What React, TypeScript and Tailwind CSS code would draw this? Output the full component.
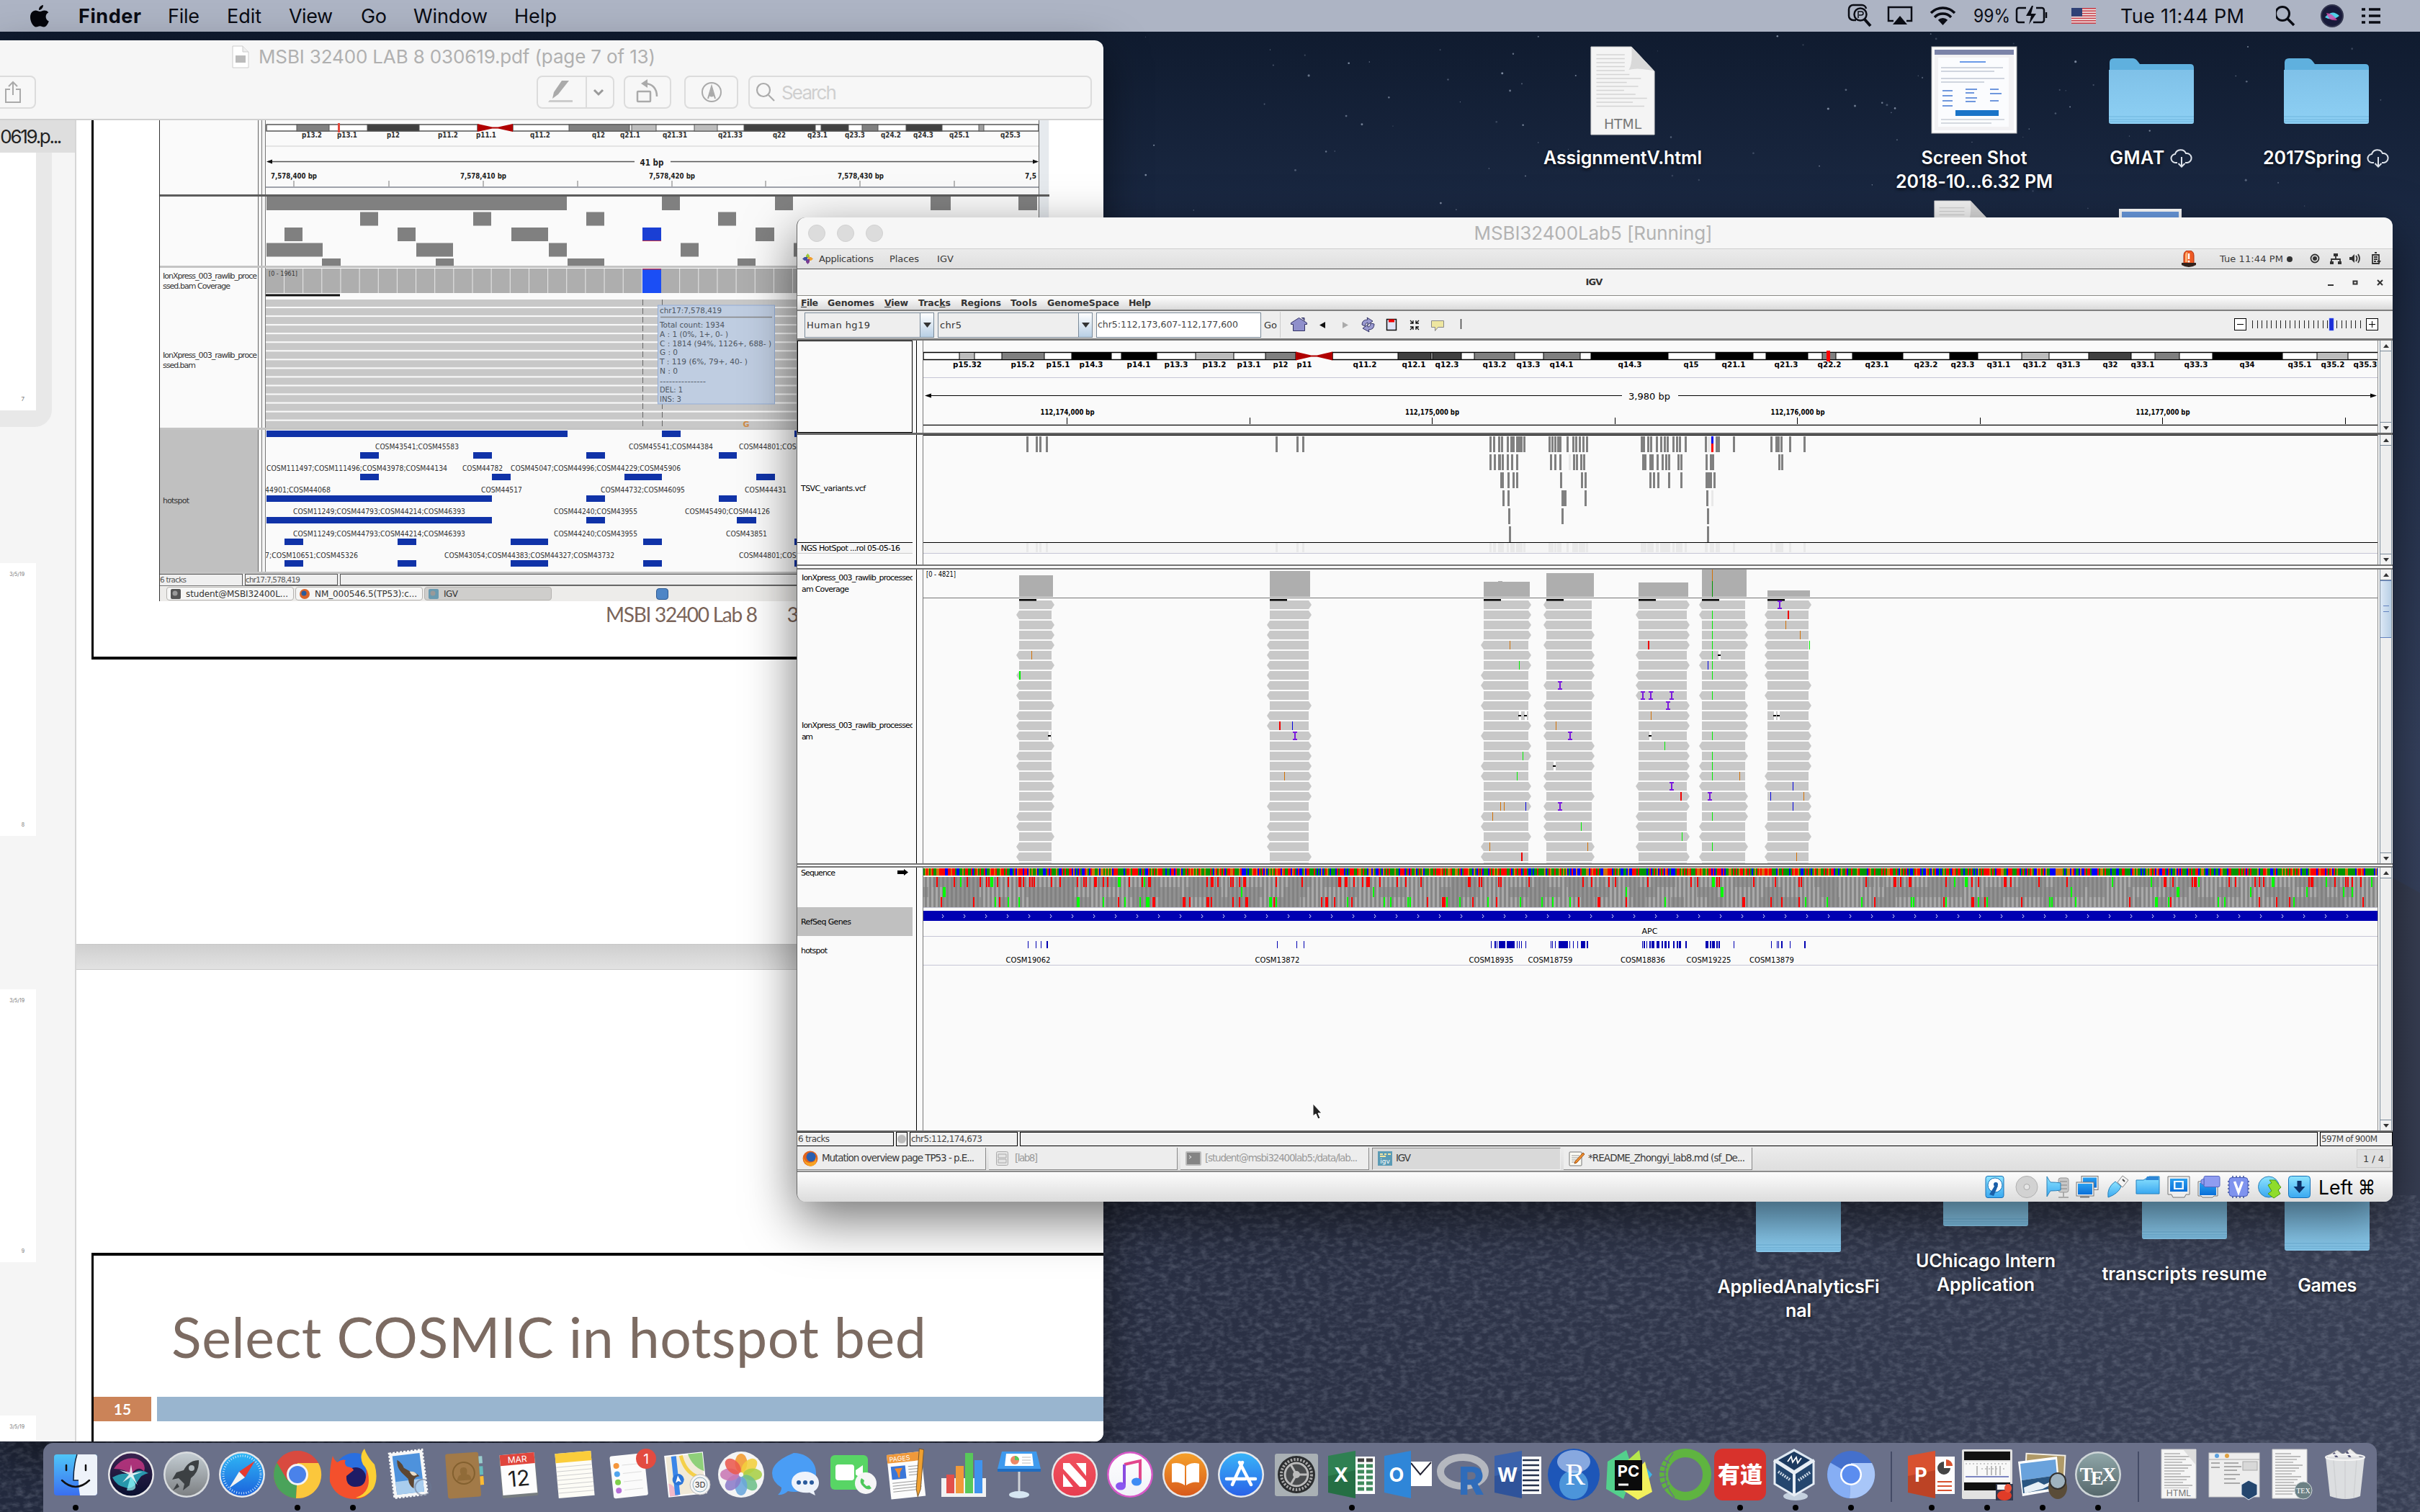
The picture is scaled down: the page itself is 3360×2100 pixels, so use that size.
import React, { useLayoutEffect, useRef, useState, ReactNode } from "react";

const SANS = "[font-family:Inter,sans-serif]";
const DJV = "[font-family:'DejaVu_Sans',sans-serif]";

/* Text whose letter spacing is adjusted so that it fills a given width. */
function Fit({ w, className = "", children }: { w: number; className?: string; children: ReactNode }) {
  const ref = useRef<HTMLSpanElement>(null);
  const [ls, setLs] = useState(0);
  useLayoutEffect(() => {
    const el = ref.current;
    if (!el) return;
    const n = (el.textContent || "").length;
    if (n > 1) setLs((w - el.getBoundingClientRect().width) / (n - 1));
  }, [w]);
  return (
    <span ref={ref} className={"inline-block shrink-0 whitespace-pre " + className} style={{ letterSpacing: ls + "px" }}>
      {children}
    </span>
  );
}

type TxProps = {
  x: number; y: number; w?: number; s?: number; b?: boolean; f?: string;
  a?: "start" | "middle" | "end"; children: ReactNode;
};
/* Chart label: y is the vertical middle of the text. */
function Tx({ x, y, w, s = 11, b, f = "#111", a = "middle", children }: TxProps) {
  return (
    <text x={x} y={y + s * 0.37} fontSize={s} fontWeight={b ? 700 : 400} fill={f} textAnchor={a}
      textLength={w} lengthAdjust="spacingAndGlyphs" className={DJV}>
      {children}
    </text>
  );
}

/* ---------------------------------------------------------------- menu bar */

function AppleLogo() {
  return (
    <svg width="26" height="31" viewBox="0 0 26 31" fill="#05060c">
      <path d="M18 0c.2 3.6-2.700 7-6 7C11.600 3.600 14.700.3 18 0zM21.600 16.300c0-3 1.700-4.700 3.700-6C23.800 8.300 21.700 7.600 19.700 7.600c-2.700 0-4.200 1.400-6.200 1.400S9.700 7.600 7.500 7.600C3.500 7.600 0 11 0 17c0 6.500 4.500 13.500 8 13.500 2 0 3-1.300 5.500-1.300s3.200 1.300 5.500 1.300c3 0 5.700-4.500 6.800-8-2.500-1.100-4.200-3.200-4.200-6.200z" />
    </svg>
  );
}

function MenuBar() {
  return (
    <div className={"flex h-11 items-center bg-[#adb4c4] text-[27px] leading-none text-[#0a0c14] " + SANS}>
      <div className="w-[109px] pl-[42px]"><AppleLogo /></div>
      <div className="w-[124px] font-bold"><Fit w={87}>Finder</Fit></div>
      <div className="w-[82px]"><Fit w={44}>File</Fit></div>
      <div className="w-[86px]"><Fit w={48}>Edit</Fit></div>
      <div className="w-[100px]"><Fit w={61}>View</Fit></div>
      <div className="w-[73px]"><Fit w={36}>Go</Fit></div>
      <div className="w-[140px]"><Fit w={103}>Window</Fit></div>
      <div><Fit w={59}>Help</Fit></div>
      <div className="flex-1" />
      <svg width="290" height="44" viewBox="2555 0 290 44" fill="none" stroke="#0a0c14" strokeWidth="2.500">
        <path d="M2578 28h-4a6 6 0 0 1-6-6v-9a6 6 0 0 1 6-6h12a6 6 0 0 1 6 5" />
        <circle cx="2584" cy="20" r="8.500" fill="#adb4c4" />
        <path d="M2581 25v-9h4q3 0 3 2.500t-3 2.500h-3" strokeWidth="1.500" />
        <path d="M2590 27l8 9" strokeWidth="4" />
        <path d="M2630 29h-7V10h32v19h-7" />
        <path d="M2639 22l10 12h-20z" fill="#0a0c14" stroke="none" />
        <path d="M2682 18a23 23 0 0 1 33 0M2687 24a16 16 0 0 1 23 0M2693 29a8 8 0 0 1 11 0" strokeWidth="3.500" />
        <path d="M2694 30l4.500 5 4.500-5a6 6 0 0 0-9 0z" fill="#0a0c14" stroke="none" />
        <g transform="translate(2800 8)" strokeWidth="2.500">
          <path d="M14 3H4a3 3 0 0 0-3 3v14a3 3 0 0 0 3 3h8M28 3h8a3 3 0 0 1 3 3v14a3 3 0 0 1-3 3H24" />
          <path d="M22 0l-8 14h7l-3 12 10-15h-7l3-11z" fill="#0a0c14" stroke="none" />
          <path d="M42 9v8" />
        </g>
        <text x="2741" y="31" fontSize="25" fill="#0a0c14" stroke="none" textLength="51" lengthAdjust="spacingAndGlyphs" className={SANS}>99%</text>
      </svg>
      <svg width="34" height="22" viewBox="0 0 34 22" className="ml-8">
        <rect width="34" height="22" fill="#f2eded" />
        {[0, 2, 4, 6, 8, 10, 12].map((i) => <rect key={i} y={(i * 22) / 13} width="34" height="1.700" fill="#c8404a" />)}
        <rect width="15" height="11.800" fill="#2f4176" />
      </svg>
      <div className="ml-[34px] w-[216px]"><Fit w={172}>Tue 11:44 PM</Fit></div>
      <svg width="145" height="44" viewBox="3160 0 145 44" fill="none" stroke="#0a0c14" strokeWidth="3" className="mr-[55px]">
        <circle cx="3169" cy="19" r="9.500" />
        <path d="M3176 26l9 9" strokeWidth="3.500" />
        <circle cx="3238" cy="22" r="15" fill="#181a3a" stroke="#33364f" strokeWidth="2" />
        <path d="M3228 24q10-12 20-2q-10 8-20 2z" fill="#4fd0e8" stroke="none" />
        <path d="M3230 18q8 0 15 10q-12 2-15-10z" fill="#d748a8" stroke="none" opacity=".8" />
        <path d="M3279 13h5M3279 22h5M3279 31h5M3289 13h24M3289 22h24M3289 31h24" strokeWidth="3.500" />
      </svg>
    </div>
  );
}

/* ----------------------------------------------------------- preview window */

type Seg = [number, number, string];
const W = "#fff";

function Ideogram({ segs, y, h, line, cen }: { segs: Seg[]; y: number; h: number; line: string; cen: [number, number] }) {
  const x0 = segs[0][0];
  const x1 = segs[segs.length - 1][1];
  const mid = (cen[0] + cen[1]) / 2;
  return (
    <g>
      <rect x={x0} y={y} width={cen[0] - x0} height={h} fill="#fff" stroke={line} strokeWidth="1.500" />
      <rect x={cen[1]} y={y} width={x1 - cen[1]} height={h} fill="#fff" stroke={line} strokeWidth="1.500" />
      {segs.filter((s) => s[2] !== W).map((s, i) => (
        <rect key={i} x={s[0]} y={y} width={s[1] - s[0]} height={h} fill={s[2]} stroke={line} strokeWidth="1" />
      ))}
      <path d={`M${cen[0]} ${y - 1}L${mid - 4} ${y + h / 2 - 1}H${mid + 4}L${cen[1]} ${y - 1}V${y + h + 1}L${mid + 4} ${y + h / 2 + 1}H${mid - 4}L${cen[0]} ${y + h + 1}z`} fill="#b00000" />
    </g>
  );
}

const SLIDE_SEGS: Seg[] = [
  [370, 412, W], [412, 457, "#808080"], [510, 582, "#404040"], [790, 874, "#808080"], [877, 911, "#bdbdbd"],
  [964, 996, "#bdbdbd"], [1033, 1132, "#404040"], [1140, 1178, "#404040"], [1197, 1219, "#808080"],
  [1258, 1308, "#404040"], [1359, 1366, "#a0a0a0"], [1366, 1442, W],
];
const SLIDE_BANDS: [string, number][] = [
  ["p13.2", 433], ["p13.1", 482], ["p12", 546], ["p11.2", 622], ["p11.1", 675], ["q11.2", 750], ["q12", 831],
  ["q21.1", 875], ["q21.31", 937], ["q21.33", 1014], ["q22", 1082], ["q23.1", 1135], ["q23.3", 1187], ["q24.2", 1237],
  ["q24.3", 1282], ["q25.1", 1332], ["q25.3", 1403],
];
const SLIDE_VARIANTS: [number, number, number][] = [
  [273, 370, 787], [273, 919, 944], [273, 1076, 1101], [273, 1292, 1320], [273, 1414, 1440],
  [294.500, 500, 525], [294.500, 657, 682], [294.500, 814, 839], [294.500, 997, 1022],
  [316, 395, 420], [316, 552, 577], [316, 710, 761], [316, 1049, 1075],
  [337.500, 370, 448], [337.500, 578, 629], [337.500, 762, 787], [337.500, 945, 970], [337.500, 1102, 1130],
  [359, 447, 473], [359, 605, 630], [359, 788, 839], [359, 1024, 1049],
];
const SLIDE_BARS: [number, number, number][] = [
  [598, 370, 788], [598, 919, 945], [598, 1103, 1120], [628, 500, 526], [628, 657, 683], [628, 814, 840], [628, 998, 1023],
  [658, 500, 526], [658, 683, 709], [658, 867, 919], [658, 1050, 1076], [688, 370, 683], [688, 814, 840], [688, 998, 1023],
  [718, 370, 683], [718, 814, 840], [718, 1023, 1050],
  [748, 395, 421], [748, 552, 578], [748, 709, 761], [748, 893, 919], [748, 1103, 1120],
  [778, 395, 421], [778, 552, 578], [778, 709, 761], [778, 893, 919], [778, 1103, 1120],
];
const SLIDE_COSM: [number, number, number, string][] = [
  [620, 521, 637, "COSM43541;COSM45583"], [620, 873, 990, "COSM45541;COSM44384"], [620, 1026, 1143, "COSM44801;COSM44384"],
  [650, 370, 621, "COSM111497;COSM111496;COSM43978;COSM44134"], [650, 642, 698, "COSM44782"],
  [650, 709, 945, "COSM45047;COSM44996;COSM44229;COSM45906"],
  [680, 368, 459, "44901;COSM44068"], [680, 668, 725, "COSM44517"], [680, 834, 951, "COSM44732;COSM46095"], [680, 1034, 1092, "COSM44431"],
  [710, 407, 646, "COSM11249;COSM44793;COSM44214;COSM46393"], [710, 769, 885, "COSM44240;COSM43955"], [710, 951, 1069, "COSM45490;COSM44126"],
  [741, 407, 646, "COSM11249;COSM44793;COSM44214;COSM46393"], [741, 769, 885, "COSM44240;COSM43955"], [741, 1008, 1065, "COSM43851"],
  [771, 362, 497, "97;COSM10651;COSM45326"], [771, 617, 853, "COSM43054;COSM44383;COSM44327;COSM43732"], [771, 1026, 1143, "COSM44801;COSM44384"],
];

function SlideRow({ h, label, children, y, dark }: { h: number; y: number; label?: ReactNode; children: ReactNode; dark?: boolean }) {
  return (
    <div className={"flex border-b-[3px] bg-[#fafafa] " + (dark ? "border-[#5c5c5c]" : "border-[#c4c4c4]")}>
      <div className={"relative w-[137px] shrink-0 border-r border-[#666] text-[11px] leading-[14px] text-[#333] " + DJV}>{label}</div>
      <div className="w-[10px] shrink-0 border-r border-[#777] bg-[#f4f4f4]"><div className="ml-1 h-full w-px bg-[#777]" /></div>
      <svg width="1073" height={h} viewBox={`369 ${y} 1073 ${h}`} className="block shrink-0">{children}</svg>
      <div className="w-[14px] border-l border-[#666] bg-[#e6eaee]" />
    </div>
  );
}

function SlideShot() {
  return (
    <div className="ml-[92px] w-[1236px] border-l border-[#333]">
      <SlideRow h={103} y={167} dark>
        <Ideogram segs={SLIDE_SEGS} y={173} h={9} line="#555" cen={[663, 712]} />
        <rect x="469" y="171" width="3" height="13" fill="#e2483c" />
        {SLIDE_BANDS.map(([t, x]) => <Tx key={t} x={x} y={187} w={t.length === 6 ? 34 : t.length === 5 ? 28 : 18} s={10.500} b f="#333">{t}</Tx>)}
        <path d="M369 203h1073" stroke="#ddd" strokeWidth="1.500" />
        <path d="M372 224.500H881M931 224.500H1440" stroke="#555" strokeWidth="1.500" />
        <path d="M370 224.500l8-3v6zM1442 224.500l-8-3v6z" fill="#111" />
        <Tx x={905} y={225.500} w={33} s={12.500} b f="#222">41 bp</Tx>
        {[408, 671, 933, 1195].map((x, i) => <Tx key={x} x={x} y={243.500} w={64} s={11} b f="#222">{`7,578,4${i}0 bp`}</Tx>)}
        <Tx x={1431} y={243.500} w={16} s={11} b f="#222">7,5</Tx>
        {[408, 540, 671, 802, 933, 1063, 1194, 1325].map((x) => <path key={x} d={`M${x} 251v8`} stroke="#777" />)}
        <path d="M369 260h1073" stroke="#808590" strokeWidth="1.500" />
      </SlideRow>
      <SlideRow h={96} y={273}>
        {SLIDE_VARIANTS.map(([y, a, b], i) => <rect key={i} x={a} y={y} width={b - a} height="19" fill="#808080" />)}
        <rect x="892" y="316" width="26" height="19" fill="#1a3fd4" />
        <rect x="892" y="334" width="26" height="1" fill="#d03040" />
      </SlideRow>
      <SlideRow h={222} y={372}
        label={<div className="flex h-full flex-col pl-1">
          <div className="mt-[5px]"><Fit w={131}>IonXpress_003_rawlib_proce</Fit></div>
          <div><Fit w={94}>ssed.bam Coverage</Fit></div>
          <div className="mt-[82px]"><Fit w={131}>IonXpress_003_rawlib_proce</Fit></div>
          <div><Fit w={46}>ssed.bam</Fit></div>
        </div>}>
        <rect x="369" y="373" width="1073" height="34" fill="#aeaeae" />
        {Array.from({ length: 41 }, (_, i) => <path key={i} d={`M${394.500 + i * 26.150} 373v34`} stroke="#e8e8e8" />)}
        <Tx x={373} y={379} w={40} s={9.500} a="start" f="#333">[0 - 1961]</Tx>
        <rect x="892" y="374" width="26" height="33" fill="#1b4ef5" />
        <rect x="892" y="373" width="26" height="1.500" fill="#b03050" />
        <rect x="369" y="408.500" width="103" height="3" fill="#111" />
        {Array.from({ length: 15 }, (_, i) => <rect key={i} x="369" y={416 + i * 12.050} width="1073" height="10" fill="#c8c8c8" />)}
        <path d="M892.500 416v178M919.500 416v178" stroke="#666" strokeDasharray="8 4" />
        <Tx x={1036} y={589} s={11} b f="#cf8a45">G</Tx>
        <rect x="913.500" y="424" width="162" height="137" fill="#bfcde1" stroke="#94aed8" />
        <path d="M917 440.500h155" stroke="#888" strokeWidth="1.500" />
        {([[431, 86, "chr17:7,578,419"], [451, 90, "Total count: 1934"], [464, 95, "A : 1 (0%, 1+, 0- )"], [477, 155, "C : 1814 (94%, 1126+, 688- )"],
          [489.500, 25, "G : 0"], [502.500, 122, "T : 119 (6%, 79+, 40- )"], [515.500, 25, "N : 0"], [529, 64, "---------------"], [541, 32, "DEL: 1"], [554, 30, "INS: 3"]] as [number, number, string][]).map(([y, w, t]) => (
          <Tx key={y} x={916} y={y} w={w} s={10.500} a="start" f="#4d5560">{t}</Tx>
        ))}
      </SlideRow>
      <SlideRow h={197} y={597} label={<div className="flex h-full items-center bg-[#c0c0c0] pl-1"><Fit w={37}>hotspot</Fit></div>}>
        {SLIDE_BARS.map(([y, a, b], i) => <rect key={i} x={a} y={y} width={b - a} height="9" fill="#1033a8" />)}
        {SLIDE_COSM.map(([y, a, b, t], i) => <Tx key={i} x={a} y={y + 0.500} w={b - a} s={10.500} a="start" f="#333">{t}</Tx>)}
      </SlideRow>
      <div className={"flex h-[17px] gap-[3px] border-b border-[#777] bg-[#efefef] text-[10.500px] leading-[15px] text-[#555] " + DJV}>
        <div className="w-[115px] border-t border-r border-[#555]"><Fit w={37}>6 tracks</Fit></div>
        <div className="w-[129px] border border-[#555]"><Fit w={76}>chr17:7,578,419</Fit></div>
        <div className="flex-1 border border-r-0 border-[#555]" />
      </div>
      <div className={"flex h-[21px] items-center gap-[2px] bg-[#edecea] pl-[9px] text-[12px] leading-none text-[#333] " + DJV}>
        {[["student@MSBI32400L...", "#555", 142], ["NM_000546.5(TP53):c...", "#d9642a", 142], ["IGV", "#6a9ab0", 20]].map(([t, c, w], i) => (
          <div key={i} className={"flex h-[19px] w-[177px] items-center gap-[7px] rounded-sm border border-[#b5b3b0] pl-[5px] " + (i === 2 ? "bg-[#cfcecc]" : "bg-[#f6f6f5]")}>
            <svg width="14" height="14" viewBox="0 0 14 14"><rect width="14" height="14" rx={i === 1 ? 7 : 2} fill={c as string} /><circle cx="6" cy="6" r="3.500" fill={i === 1 ? "#2c5a9c" : "#999"} /></svg>
            <Fit w={w as number}>{t}</Fit>
          </div>
        ))}
        <div className="ml-[143px] h-4 w-[17px] rounded-sm border border-[#2d5a92] bg-[#4f86c6]" />
      </div>
    </div>
  );
}

function ToolButton({ w, className = "", children }: { w: number; className?: string; children: ReactNode }) {
  return (
    <div className={"flex h-[46px] shrink-0 items-center justify-center rounded-[8px] border-2 border-[#dcdcdc] bg-[#f7f7f7] " + className} style={{ width: w }}>
      {children}
    </div>
  );
}

function PreviewWindow() {
  return (
    <div className="absolute left-0 top-[56px] flex h-[1946px] w-[1532px] flex-col overflow-hidden rounded-r-[12px] bg-[#f6f6f6] shadow-[0_20px_60px_rgba(0,0,0,0.5)]">
      <div className={"flex h-[46px] items-center pl-[322px] text-[26px] leading-none text-[#b0b0b0] " + SANS}>
        <svg width="24" height="32" viewBox="0 0 24 32" className="mr-[13px]">
          <path d="M1 1h14l8 8v22H1z" fill="#fff" stroke="#ccc" />
          <path d="M15 1v8h8" fill="#eee" stroke="#ccc" />
          <path d="M5 14h14v10H5z" fill="#bbb" />
        </svg>
        <Fit w={551}>MSBI 32400 LAB 8 030619.pdf (page 7 of 13)</Fit>
      </div>
      <div className={"flex h-[65px] items-start border-b-2 border-[#d0d0d0] pt-[3px] " + SANS}>
        <ToolButton w={62} className="-ml-3">
          <svg width="24" height="32" viewBox="0 0 24 32" fill="none" stroke="#aaa" strokeWidth="2"><path d="M7 12H1v18h20V12h-6M11 20V2M5 8l6-6 6 6" /></svg>
        </ToolButton>
        <ToolButton w={108} className="ml-[695px]">
          <svg width="104" height="42" viewBox="0 0 104 42" fill="#aaa">
            <path d="M33 5L22 21l-2 9 8-6L43 5z" /><path d="M16 32h32v3H14z" fill="#ccc" />
            <path d="M66 0h2v42h-2z" fill="#dcdcdc" /><path d="M78 18l6 6 6-6" fill="none" stroke="#999" strokeWidth="3" />
          </svg>
        </ToolButton>
        <ToolButton w={66} className="ml-[13px]">
          <svg width="40" height="38" viewBox="0 0 40 38" fill="none" stroke="#aaa" strokeWidth="2.500"><rect x="6" y="18" width="18" height="14" rx="1" /><path d="M16 7c10 0 17 6 17 18" /><path d="M20 1v12l-9-6z" fill="#aaa" stroke="none" /></svg>
        </ToolButton>
        <ToolButton w={75} className="ml-[18px]">
          <svg width="30" height="30" viewBox="0 0 30 30" fill="none" stroke="#aaa" strokeWidth="2"><circle cx="15" cy="15" r="13" /><path d="M10 24l5-17 5 17M15 7v8" /><circle cx="15" cy="18" r="2.500" fill="#aaa" /></svg>
        </ToolButton>
        <ToolButton w={477} className="ml-[14px]">
          <div className="flex w-full items-center gap-2 pl-2 text-[26px] text-[#cfcfcf]">
            <svg width="28" height="28" viewBox="0 0 28 28" fill="none" stroke="#aaa" strokeWidth="2.200"><circle cx="11" cy="11" r="9" /><path d="M18 18l8 8" /></svg>
            <Fit w={77}>Search</Fit>
          </div>
        </ToolButton>
      </div>
      <div className="flex min-h-0 flex-1">
        <div className={"flex w-[106px] shrink-0 flex-col overflow-hidden border-r-2 border-[#d6d6d6] bg-[#f5f5f5] text-[26px] " + SANS}>
          <div className="flex h-[45px] shrink-0 items-center justify-end bg-[#dedede] pr-[20px] leading-none text-[#222]"><Fit w={86}>0619.p...</Fit></div>
          <div className="h-[381px] w-[72px] shrink-0 rounded-br-[24px] bg-[#e8e8e8]">
            <div className="flex h-[358px] w-[50px] items-end justify-end bg-white pb-3 pr-4 text-[8px] leading-none text-[#777]">7</div>
          </div>
          {[0, 1, 2].map((i) => (
            <div key={i} className={"flex h-[379px] w-[50px] shrink-0 flex-col items-end justify-between bg-white pr-4 pt-3 pb-3 text-[7px] leading-none text-[#777] " + (i ? "mt-[213px]" : "mt-[189px]")}>
              <span>3/5/19</span><span>{8 + i}</span>
            </div>
          ))}
        </div>
        <div className="flex flex-1 flex-col overflow-hidden bg-white">
          <div className="h-[1144px] shrink-0">
            <div className="ml-[21px] h-[749px] w-[1500px] overflow-hidden border-b-[4px] border-l-[3px] border-black">
              <div className="-ml-px"><SlideShot /></div>
              <div className="ml-[711px] mt-[1px] flex gap-[42px] text-[28px] leading-[34px] text-[#7a6459] [font-family:Lato,sans-serif]">
                <Fit w={211}>MSBI 32400 Lab 8</Fit><span>3/5/19</span>
              </div>
            </div>
          </div>
          <div className="h-[36px] shrink-0 border-y border-[#c8c8c8] bg-gradient-to-b from-[#cfcfcf] to-[#e2e2e2]" />
          <div className="h-[393px] shrink-0" />
          <div className="ml-[21px] flex flex-1 flex-col border-l-[3px] border-t-[4px] border-black">
            <div className="pl-[108px] pt-[62px] text-[77px] leading-[100px] text-[#7c6b62] [font-family:Lato,sans-serif]"><Fit w={1048}>Select COSMIC in hotspot bed</Fit></div>
            <div className="mt-[34px] flex h-[34px] gap-2">
              <div className="flex w-[80px] items-center justify-center bg-[#cb8358] text-[21px] font-bold text-white [font-family:Lato,sans-serif]">15</div>
              <div className="flex-1 bg-[#99b5cf]" />
            </div>
          </div>
        </div>
      </div>
    </div>
  );
}

/* --------------------------------------------------------------- IGV tracks */

const SEGS: Seg[] = [
  [1282, 1332, W], [1332, 1353, "#bdbdbd"], [1391, 1450, "#808080"], [1488, 1543, "#000"], [1557, 1606, "#000"],
  [1660, 1713, "#bdbdbd"], [1757, 1799, "#808080"], [1941, 1987, "#404040"], [1989, 2029, "#404040"], [2047, 2103, "#808080"],
  [2143, 2194, "#808080"], [2209, 2316, "#000"], [2382, 2434, "#000"], [2452, 2510, "#000"], [2530, 2549, "#808080"],
  [2572, 2642, "#000"], [2707, 2746, "#000"], [2807, 2845, "#bdbdbd"], [2900, 2959, "#404040"], [2992, 3026, "#808080"],
  [3072, 3169, "#000"], [3217, 3260, "#bdbdbd"], [3260, 3302, W],
];
const BANDS: [string, number][] = [
  ["p15.32", 1343], ["p15.2", 1420], ["p15.1", 1469], ["p14.3", 1515], ["p14.1", 1581], ["p13.3", 1633], ["p13.2", 1686],
  ["p13.1", 1734], ["p12", 1778], ["p11", 1811], ["q11.2", 1895], ["q12.1", 1963], ["q12.3", 2009], ["q13.2", 2075],
  ["q13.3", 2122], ["q14.1", 2168], ["q14.3", 2263], ["q15", 2348], ["q21.1", 2407], ["q21.3", 2480], ["q22.2", 2540],
  ["q23.1", 2606], ["q23.2", 2674], ["q23.3", 2725], ["q31.1", 2775], ["q31.2", 2825], ["q31.3", 2872], ["q32", 2930],
  ["q33.1", 2975], ["q33.3", 3049], ["q34", 3120], ["q35.1", 3193], ["q35.2", 3239], ["q35.3", 3284],
];

/* Each variant is a left edge, or an edge and a width. */
type Mark = number | [number, number];
const VARIANTS: Mark[][] = [
  [1425, 1438, 1443, 1452, 1771, 1800, 1808, 2068, 2073, 2080, 2084, 2092, [2097, 6], 2105, [2108, 6], 2115, 2150, 2154, 2158,
    [2162, 6], 2175, 2183, 2187, 2192, 2197, 2202, [2278, 6], 2287, 2291, 2299, 2305, 2310, 2314, 2322, 2327, 2331, 2339, 2367,
    [2382, 6], 2406, 2458, [2465, 6], 2472, 2484, 2504],
  [2068, 2074, [2080, 4], 2085, 2092, 2098, 2105, 2152, 2158, 2165, 2184, 2188, 2194, 2198, [2280, 6], [2290, 6], 2300, 2307,
    2312, 2316, 2329, 2333, 2368, [2374, 6], 2469, 2473],
  [[2083, 5], 2093, 2100, 2105, 2166, 2195, 2200, 2290, 2295, 2301, 2316, 2333, [2368, 9], 2379],
  [2086, 2093, [2168, 7], 2200, 2369],
  [2094, 2168, 2370],
  [2095, 2370],
];
const markRect = (m: Mark, d: number) => (typeof m === "number" ? [m, d] : m);

const READ_COLS: { x: number; e: number; top: number; ce: number; dir: string }[] = [
  { x: 1415, e: 1460, top: 799, ce: 1462, dir: "RLRRRLRLLLRLLLRLLRRRRLLRLL" },
  { x: 1763, e: 1817, top: 793, ce: 1819, dir: "RRLLLLLLLLRLLRRRRRRRLRLLLR" },
  { x: 2060, e: 2122, top: 808, ce: 2124, dir: "RRRRLRRLLRLNRLRRLLRRRLLRLL" },
  { x: 2147, e: 2210, top: 796, ce: 2213, dir: "LLLRLRRRLRLLLLRRRLLRLLLLRR" },
  { x: 2275, e: 2342, top: 809, ce: 2344, dir: "RLRRRLRLLLRRRNRRRRLRRLLRLR" },
  { x: 2363, e: 2423, top: 791, ce: 2425, dir: "LLRRRLLRRLRRRRLRLLLRRRLLRL" },
  { x: 2454, e: 2511, top: 820, ce: 2513, dir: "RLLLLLLLRLRNRRRRRLLRRRLRLL" },
];
const O = "#d17105", G = "#00f000", R = "#f00000", B = "#0000e0";
const MISMATCH: [number, number, string][] = [
  [5, 1432, O], [7, 1415, G], [12, 1776, R], [12, 1794, B], [17, 1783, O],
  [4, 2096, O], [6, 2109, G], [15, 2114, G], [17, 2106, G], [20, 2083, O], [20, 2088, O], [20, 2118, B], [21, 2072, O], [24, 2068, O], [25, 2112, R],
  [12, 2160, O], [22, 2195, G], [24, 2204, O],
  [4, 2288, R], [11, 2292, O], [14, 2311, G], [19, 2333, R], [23, 2335, G],
  ...[1, 2, 3, 4, 5, 6, 7, 9, 13, 15, 16, 17, 21, 24].map((r) => [r, 2377, G] as [number, number, string]),
  [6, 2371, B], [17, 2415, O],
  [1, 2482, R], [2, 2479, O], [3, 2499, O], [4, 2512, G], [18, 2489, B], [19, 2458, B], [19, 2504, O], [20, 2489, B], [25, 2494, O],
];
const INSERTS: [number, number][] = [
  [13, 1798], [8, 2166], [13, 2180], [20, 2166], [9, 2281], [9, 2292], [9, 2321], [10, 2316], [18, 2321], [19, 2374], [0, 2471],
];
const DELETES: [number, number][] = [[13, 1457], [11, 2110], [11, 2118], [16, 2158], [13, 2291], [5, 2387], [11, 2464], [11, 2469]];

const HOTSPOTS: Mark[] = [
  1427, 1438, 1445, [1453, 2], 1773, 1800, 1810, 2070, [2075, 2], 2078, [2081, 9], [2092, 11], 2106, 2109, 2112, 2118, 2153, 2155, 2159,
  [2164, 13], 2179, 2184, 2190, [2195, 6], [2203, 2], 2280, [2282, 2], 2286, [2290, 2], [2293, 4], [2300, 4], [2307, 2], [2311, 3], [2316, 2],
  [2323, 2], [2328, 2], [2331, 3], [2340, 2], [2368, 4], [2374, 2], [2377, 4], [2383, 2], [2386, 2], 2407, 2459, 2467, 2469, [2473, 2], 2485, [2505, 2],
];

function rng(seed: number) {
  let s = seed;
  return () => {
    s = (s * 1664525 + 1013904223) % 4294967296;
    return s / 4294967296;
  };
}

function seqPaths() {
  const r = rng(7);
  const cols = ["#009600", "#ff0000", "#0000ff", "#d17105"];
  const d = ["", "", "", ""];
  for (let x = 1282; x < 3301; x += 2) {
    const v = r();
    d[v < 0.36 ? 0 : v < 0.65 ? 1 : v < 0.84 ? 2 : 3] += `M${x} 1206h2v10h-2z`;
  }
  return cols.map((c, i) => <path key={c} d={d[i]} fill={c} />);
}

function aminoPaths() {
  const r = rng(23);
  let red = "", green = "";
  const rates = [[0.13, 0.015], [0, 0.02], [0.06, 0.05]];
  rates.forEach(([a, b], row) => {
    for (let x = 1282; x < 3297; x += 3) {
      const v = r();
      const y = 1218 + row * 14;
      const wd = r() < 0.15 ? 4 : 2;
      if (v < a) red += `M${x} ${y}h${wd}v14h-${wd}z`;
      else if (v < a + b) green += `M${x} ${y}h${wd}v14h-${wd}z`;
    }
  });
  return (
    <>
      <path d={red} fill="#ff0000" />
      <path d={green} fill="#00ff00" />
    </>
  );
}

/* Stretches of the amino-acid rows where the stripes run into a solid tone. */
function aminoBlocks() {
  const r = rng(41);
  let d = "";
  for (let row = 0; row < 3; row++) {
    for (let x = 1282; x < 3260; ) {
      const w = 6 + Math.floor(r() * 30);
      if (r() < (row === 1 ? 0.6 : 0.35)) d += `M${x} ${1218 + row * 14}h${w}v14h-${w}z`;
      x += w;
    }
  }
  return <path d={d} fill="#808080" opacity=".55" />;
}

function HeaderTrack() {
  return (
    <>
      <Ideogram segs={SEGS} y={489.500} h={10} line="#000" cen={[1799, 1850]} />
      <rect x="2536" y="487" width="5" height="15" fill="#f00" />
      {BANDS.map(([t, x]) => <Tx key={t} x={x} y={505.500} s={11} b f="#000" w={t.length === 6 ? 40 : t.length === 5 ? 33 : 21}>{t}</Tx>)}
      <path d="M1282 524.500h2019" stroke="#c5c5d5" />
      <path d="M1286 549.500H2252M2330 549.500H3297" stroke="#000" />
      <path d="M1284 549.500l9-3v6zM3300 549.500l-9-3v6z" />
      <Tx x={2290} y={550.500} w={58} s={13} f="#000">3,980 bp</Tx>
      {[1482, 1988.500, 2496, 3003].map((x, i) => <Tx key={x} x={x} y={571.500} w={75} s={11} b f="#000">{`112,17${4 + i},000 bp`}</Tx>)}
      {[1481.500, 1735.500, 1988.500, 2242.500, 2495.500, 2749.500, 3002.500, 3256.500].map((x) => <path key={x} d={`M${x} 580v9`} stroke="#000" />)}
      <path d="M1282 589.500h2019" stroke="#c5c5c5" />
      <path d="M1282 590.500h2019" stroke="#000" />
    </>
  );
}

function VariantTrack() {
  return (
    <>
      <path d="M1282 604.500h2019M1282 753.500h2019" stroke="#000" />
      <rect x="1282" y="754" width="2019" height="14" fill="#f5f5f5" />
      {VARIANTS.map((row, i) => row.map((m, j) => {
        const [x, w] = markRect(m, 3);
        return (
          <g key={i + "-" + j}>
            <rect x={x} y={606 + i * 25} width={w} height="22" fill="#808080" />
            {i < 2 && <rect x={x} y="754" width={w} height="13" fill="#e9e9e9" />}
          </g>
        );
      }))}
      <rect x="2371" y="606" width="5" height="22" fill="#e9e9e9" />
      <rect x="2178" y="631" width="3" height="22" fill="#e9e9e9" />
      <rect x="2376" y="681" width="3" height="22" fill="#e9e9e9" />
      <rect x="2376" y="606" width="3" height="10" fill="#00e" />
      <rect x="2376" y="616" width="3" height="12" fill="#f00" />
      <path d="M1282 768.500h2019" stroke="#c5c5d5" />
    </>
  );
}

function ReadsTrack() {
  return (
    <>
      <path d="M1282 830.500h2019" stroke="#777" />
      <Tx x={1286} y={797} w={41} s={10.500} a="start" f="#000">[0 - 4821]</Tx>
      {READ_COLS.map((c) => (
        <g key={c.x}>
          <rect x={c.x} y={c.top} width={c.ce - c.x} height={829 - c.top} fill="#aeaeae" />
          <rect x={c.x} y="834" width={c.e - c.x} height="1" fill="#777" />
          {c.dir.split("").map((d, r) => {
            const y = 834 + r * 14;
            const right = d === "R" ? `L${c.e + 4} ${y + 6}` : "";
            const left = d === "L" ? `L${c.x - 4} ${y + 6}` : "";
            return <path key={r} d={`M${c.x} ${y}H${c.e}${right}L${c.e} ${y + 12}H${c.x}${left}z`} fill="#c8c8c8" />;
          })}
          <rect x={c.x} y="1198" width={c.e - c.x} height="2" fill="#c8c8c8" />
          <rect x={c.x} y="832" width="24" height="2.500" fill="#000" />
        </g>
      ))}
      <rect x="2080" y="807" width="6" height="1" fill="#aeaeae" />
      <rect x="2377" y="791" width="1" height="16" fill="#d17105" />
      <rect x="2377" y="807" width="1" height="22" fill="#009600" />
      {MISMATCH.map(([r, x, c], i) => <rect key={i} x={x} y={834 + r * 14} width={x !== 2377 && (c === R || x === 1415) ? 2 : 1} height="12" fill={c} />)}
      {DELETES.map(([r, x], i) => (
        <g key={i}>
          <rect x={x - 1} y={834 + r * 14} width="3" height="12" fill="#fff" />
          <rect x={x - 2} y={839 + r * 14} width="4" height="2" fill="#000" />
        </g>
      ))}
      {INSERTS.map(([r, x], i) => <path key={i} transform={`translate(${x - 3} ${834 + r * 14})`} d="M0 0h6v2H4v8h2v2H0v-2h2V2H0z" fill="#7a18dc" />)}
    </>
  );
}

function GeneTrack() {
  return (
    <>
      <defs>
        <pattern id="codons" width="6" height="14" patternUnits="userSpaceOnUse">
          <rect width="6" height="14" fill="#a9a9a9" /><rect width="3" height="14" fill="#868686" />
        </pattern>
      </defs>
      {seqPaths()}
      <rect x="1282" y="1218" width="2019" height="42" fill="url(#codons)" />
      {aminoBlocks()}
      {aminoPaths()}
      <path d="M1282 1260.500h2019M1282 1300.500h2019M1282 1340.500h2019" stroke="#c5c5d5" />
      <rect x="1282" y="1265" width="2019" height="14" fill="#0000b2" />
      {Array.from({ length: 66 }, (_, i) => <path key={i} d={`M${1308 + i * 30} 1270l2 2.500-2 2.500`} stroke="#e8e8ff" fill="none" />)}
      <Tx x={2290.500} y={1293.500} w={22} s={10.500} f="#000">APC</Tx>
      {HOTSPOTS.map((m, i) => {
        const [x, w] = markRect(m, 1);
        return <rect key={i} x={x} y="1307" width={w} height="10" fill="#0000b2" />;
      })}
      {([["COSM19062", 1427.500], ["COSM13872", 1773.500], ["COSM18935", 2070.500], ["COSM18759", 2152.500], ["COSM18836", 2281], ["COSM19225", 2372.500], ["COSM13879", 2460]] as [string, number][]).map(([t, x]) => (
        <Tx key={t} x={x} y={1333.500} w={62} s={10.500} f="#000">{t}</Tx>
      ))}
    </>
  );
}

/* ---------------------------------------------------------------- IGV window */

function ScrollBar({ thumb }: { thumb?: boolean }) {
  return (
    <div className="flex flex-1 border-l border-[#888] bg-[#fafafa] pl-[2px] pr-px">
      <div className="flex flex-1 flex-col border-x border-[#7a8a99] bg-[#eee]">
        <div className="flex h-[15px] items-center justify-center border-b border-[#7a8a99] bg-[#f2f2f2]"><svg width="8" height="5"><path d="M4 0l4 5H0z" fill="#333" /></svg></div>
        {thumb && <div className="h-20 border-y border-[#6382bf] bg-gradient-to-r from-[#dce8f5] to-[#b8cfe5]"><div className="mx-auto mt-[34px] h-[9px] w-2 border-y border-[#6382bf]" /></div>}
        <div className="flex-1" />
        <div className="flex h-[15px] items-center justify-center border-t border-[#7a8a99] bg-[#f2f2f2]"><svg width="8" height="5"><path d="M0 0h8L4 5z" fill="#333" /></svg></div>
      </div>
    </div>
  );
}

function TrackRow({ y, h, label, thumb, box, children }: { y: number; h: number; label?: ReactNode; thumb?: boolean; box?: boolean; children: ReactNode }) {
  return (
    <div className="flex shrink-0 bg-[#fafafa]" style={{ height: h }}>
      <div className={"w-[160px] shrink-0 overflow-hidden text-[11px] leading-4 text-black " + DJV + (box ? " border border-black" : "")}>{label}</div>
      <div className="w-[14px] shrink-0 pl-[5px]"><div className="h-full w-px bg-black" /></div>
      <div className="w-px shrink-0 bg-[#777]" />
      <svg width="2019" height={h} viewBox={`1282 ${y} 2019 ${h}`} className="block shrink-0">{children}</svg>
      <ScrollBar thumb={thumb} />
    </div>
  );
}

function Combo({ w, children }: { w: number; children: ReactNode }) {
  return (
    <div className="flex h-[35px] items-center border border-[#7a8a99] bg-[#eee]" style={{ width: w }}>
      <div className="flex-1 pl-[2px]">{children}</div>
      <div className="flex h-full w-[19px] items-center justify-center border-l border-[#7a8a99] bg-gradient-to-b from-white to-[#b8cfe5]">
        <svg width="11" height="7"><path d="M0 0h11L5.500 7z" fill="#333" /></svg>
      </div>
    </div>
  );
}

function IgvToolbar() {
  return (
    <div className={"flex h-[38px] shrink-0 items-center bg-[#eee] pl-[10px] text-[13px] leading-none text-[#333] " + DJV}>
      <Combo w={180}><Fit w={88}>Human hg19</Fit></Combo>
      <div className="w-[5px]" />
      <Combo w={215}><Fit w={30}>chr5</Fit></Combo>
      <div className="ml-[5px] flex h-[35px] w-[229px] items-center border border-[#7a8a99] bg-white pl-px text-[12.500px] text-[#444]"><Fit w={195}>chr5:112,173,607-112,177,600</Fit></div>
      <div className="flex h-[36px] w-[27px] items-center border-r border-[#ccc] pl-1"><Fit w={18}>Go</Fit></div>
      <svg width="260" height="38" viewBox="1778 432 260 38">
        <path d="M1792.500 448.500l11-7 11 7v2h-3v9h-16v-9h-3z" fill="#8f8fcb" stroke="#333366" />
        <path d="M1807 441.500h4v4" fill="#666699" stroke="#333366" />
        <path d="M1840 447v9l-8-4.500z" fill="#111" />
        <path d="M1864 447v9l8-4.500z" fill="#aaa" />
        <path d="M1891 451q0-7 8-7l-1-3 8 5-7 5v-3q-3 0-4 5zM1908 450q0 8-8 8l1 3-9-5 7-5v3q4 0 4-5z" fill="#9a9ad0" stroke="#333366" />
        <rect x="1925.500" y="443.500" width="13" height="15" fill="#dfe3f5" stroke="#111" strokeWidth="1.500" /><rect x="1928" y="443.500" width="8" height="4" fill="#e00" />
        <path d="M1958 445l4 4m0-4v4h-4M1970 445l-4 4m0-4v4h4M1958 458l4-4m0 4v-4h-4M1970 458l-4-4m0 4v-4h4" stroke="#111" strokeWidth="1.300" fill="none" />
        <path d="M1987.500 445.500h17v9h-8l-4 5v-5h-5z" fill="#eee6a0" stroke="#888" />
        <path d="M2028.500 443v14" stroke="#444" strokeWidth="1.500" />
      </svg>
      <div className="flex-1" />
      <svg width="204" height="38" viewBox="3100 432 204 38" className="mr-[18px]">
        <rect x="3102.500" y="442.500" width="16" height="16" fill="#fff" stroke="#000" /><path d="M3106 450.500h9" stroke="#000" />
        {Array.from({ length: 24 }, (_, i) => <path key={i} d={`M${3127.500 + Math.round(i * 6.500)} 445v11`} stroke="#222" />)}
        <rect x="3234" y="442" width="6" height="17" fill="#1c2fd8" stroke="#6680ff" strokeWidth=".5" />
        <rect x="3285.500" y="442.500" width="16" height="16" fill="#fff" stroke="#000" /><path d="M3289 450.500h9M3293.500 446v9" stroke="#000" />
      </svg>
    </div>
  );
}

function GnomeTask({ w, tw, text, icon, active, dim }: { w: number; tw: number; text: string; icon: ReactNode; active?: boolean; dim?: boolean }) {
  return (
    <div className={"flex h-[31px] items-center gap-[5px] border-b border-r pl-[7px] " + (active ? "border-[#eee] border-l border-t bg-[#d9d9d9] [border-top-color:#888] [border-left-color:#888]" : "border-[#888] bg-[#ededed]") + (dim ? " text-[#999]" : "")} style={{ width: w }}>
      {icon}<Fit w={tw}>{text}</Fit>
    </div>
  );
}

function VmStatusIcons() {
  return (
    <svg width="560" height="40" viewBox="2750 1628 560 40">
      <defs>
        <linearGradient id="vb" x1="0" y1="0" x2="0" y2="1"><stop offset="0" stopColor="#8ee4ff" /><stop offset="1" stopColor="#3aa8f0" /></linearGradient>
        <linearGradient id="vd" x1="0" y1="0" x2="0" y2="1"><stop offset="0" stopColor="#2aa0f0" /><stop offset="1" stopColor="#0a6fd8" /></linearGradient>
      </defs>
      <rect x="2756" y="1632.500" width="25" height="30" rx="3" fill="url(#vb)" stroke="#1470b8" />
      <circle cx="2769" cy="1645" r="10" fill="#fff" stroke="#1470b8" /><path d="M2769 1645l-8 13 6 2 6-14z" fill="#1b5fa8" /><circle cx="2770" cy="1644" r="3" fill="#1b5fa8" />
      <circle cx="2813" cy="1647.500" r="15" fill="#d2d2d2" stroke="#b0b0b0" /><circle cx="2813" cy="1647.500" r="4" fill="#e6e6e6" stroke="#aaa" />
      <rect x="2857" y="1635" width="14" height="20" rx="3" fill="#c8c8c8" stroke="#999" /><path d="M2864 1655v6M2857 1662h14M2859 1640h10M2859 1645h10M2859 1650h10" stroke="#999" strokeWidth="1.500" />
      <path d="M2841 1633q4 7 5 8 8 0 14 1v10q-6 1-14 1-1 1-5 8z" fill="url(#vb)" stroke="#2a80b8" />
      <rect x="2889" y="1632.500" width="23" height="19" fill="#eee" stroke="#777" /><rect x="2891" y="1634.500" width="19" height="14" fill="url(#vd)" />
      <rect x="2882" y="1641" width="24" height="19" fill="#eee" stroke="#777" /><rect x="2884" y="1643" width="20" height="15" fill="url(#vd)" /><path d="M2887 1661.500h13" stroke="#777" strokeWidth="2" />
      <path d="M2926 1662q-2-14 10-22l8 7q-4 10-18 15z" fill="url(#vb)" stroke="#2a80b8" /><path d="M2939 1641l7-9 8 6-8 10z" fill="#f4f4f4" stroke="#888" /><path d="M2946 1637l3 3" stroke="#444" strokeWidth="2" />
      <path d="M2965 1638h10l8-5h14v24h-32z" fill="url(#vb)" stroke="#2080c0" /><path d="M2980 1633h16v5h-18z" fill="#2d86d6" />
      <path d="M3009 1633h30v25h-5l-2 4h-16l-2-4h-5z" fill="#eee" stroke="#777" /><rect x="3012" y="1636" width="24" height="18" fill="url(#vd)" /><rect x="3017" y="1639" width="14" height="12" fill="#eaf6ff" /><rect x="3019.500" y="1641" width="9" height="8" fill="#1b86e4" />
      <path d="M3051 1640h27v20h-5l-2 2h-14l-2-2h-4z" fill="#eee" stroke="#777" /><rect x="3053" y="1642" width="23" height="17" fill="url(#vd)" /><rect x="3059" y="1632.500" width="22" height="15" rx="2" fill="#8f9cf0" stroke="#5566c0" /><path d="M3059 1636l-4 2v5l4 2z" fill="#8f9cf0" stroke="#5566c0" />
      <path d="M3099 1632v31M3104 1632v31M3109 1632v31M3114 1632v31M3092 1640h30M3092 1645h30M3092 1650h30M3092 1655h30" stroke="#334c9c" strokeWidth="1.500" /><rect x="3094" y="1634.500" width="26" height="26" rx="4" fill="#7f93ee" stroke="#4659b8" /><path d="M3101.500 1640l5.500 15 5.500-15" fill="none" stroke="#fff" strokeWidth="3.500" />
      <circle cx="3149" cy="1647.500" r="14.500" fill="url(#vb)" stroke="#2a80b8" /><path d="M3150 1638h8l8 10-4 4 3 5-9 6-8-6 5-4-5-8 5-3z" fill="#8fdc2c" stroke="#4e9a10" />
      <rect x="3176.500" y="1632.500" width="30" height="30" rx="4" fill="url(#vb)" stroke="#1470b8" /><path d="M3191.500 1656l-8-9h5v-8h6v8h5z" fill="#0b2f66" />
      <text x="3218" y="1658" fontSize="27" textLength="48" lengthAdjust="spacingAndGlyphs" fill="#000" className={SANS}>Left</text>
      <text x="3273" y="1658" fontSize="27" textLength="24" lengthAdjust="spacingAndGlyphs" fill="#000" className={DJV}>⌘</text>
    </svg>
  );
}

function VmWindow() {
  return (
    <div className="absolute left-[1106px] top-[302px] flex h-[1367px] w-[2216px] flex-col overflow-hidden rounded-[12px] border-l border-[#666] bg-[#f6f6f6] shadow-[0_24px_70px_rgba(0,0,0,0.55)]">
      <div className={"relative flex h-[44px] shrink-0 items-center justify-center border-b border-[#cfcfcf] pr-[5px] text-[26px] leading-none text-[#b3b3b3] " + SANS}>
        <div className="absolute left-[15px] flex gap-4">
          {[0, 1, 2].map((i) => <div key={i} className="size-6 rounded-full border border-[#d0d0d0] bg-[#dcdcdc]" />)}
        </div>
        <span className="mt-px"><Fit w={331}>MSBI32400Lab5 [Running]</Fit></span>
      </div>
      <div className={"flex h-[28px] shrink-0 items-center border-b border-[#555] bg-gradient-to-b from-[#ebebeb] to-[#dfdfdf] pl-[7px] text-[13px] leading-none text-[#3a3a3a] " + DJV}>
        <svg width="15" height="15" viewBox="0 0 15 15"><path d="M7.500 0L10 3v4H5V3z" fill="#9cc83c" /><path d="M15 7.500L12 10H8V5h4z" fill="#f0a030" /><path d="M7.500 15L5 12V8h5v4z" fill="#7a3c90" /><path d="M0 7.500L3 5h4v5H3z" fill="#4450a0" /></svg>
        <div className="ml-[8px] w-[98px]"><Fit w={76}>Applications</Fit></div>
        <div className="w-[66px]"><Fit w={41}>Places</Fit></div>
        <Fit w={23}>IGV</Fit>
        <div className="flex-1" />
        <svg width="22" height="24" viewBox="0 0 22 24"><path d="M4 18V7q0-7 7-7t7 7v11z" fill="#ee5a24" stroke="#b03010" /><path d="M6 16V7q0-5 3-5v14z" fill="#ffb070" /><path d="M1 17h20v3q-10 6-20 0z" fill="#33221c" /><path d="M11 4v8" stroke="#fff" strokeWidth="2.500" /><circle cx="11" cy="15" r="1.500" fill="#fff" /></svg>
        <div className="ml-[32px]"><Fit w={88}>Tue 11:44 PM</Fit></div>
        <div className="ml-[5px] size-2 rounded-full bg-[#333]" />
        <svg width="115" height="26" viewBox="3203 347 115 26" className="mr-[4px] ml-[20px]" fill="none" stroke="#333" strokeWidth="1.800">
          <circle cx="3214" cy="359" r="5.500" /><circle cx="3214" cy="359" r="3" fill="#333" stroke="none" />
          <path d="M3243 355v4M3237 364v-4h12v4" /><path d="M3240 352h6v4h-6zM3235 363h5v4h-5zM3246 363h5v4h-5z" fill="#333" stroke="none" />
          <path d="M3262 357h3l4-4v12l-4-4h-3z" fill="#333" stroke="none" /><path d="M3271 355q3 4 0 8M3274 353q4 6 0 12" />
          <path d="M3294 354h9v12h-9zM3297 351h3M3296 357h5M3296 360h5M3296 363h3" /><path d="M3304 358l-4 6h3l-1 4 4-6h-3z" fill="#333" stroke="none" />
        </svg>
      </div>
      <div className={"relative flex h-[37px] shrink-0 items-center justify-center border-b border-[#8a8a86] bg-[#f4f4f4] pr-[3px] text-[13px] leading-none text-[#333] " + DJV}>
        <span className="mb-px"><Fit w={24} className="font-semibold">IGV</Fit></span>
        <svg width="80" height="14" viewBox="3232 384 80 14" className="absolute right-[10px]">
          <path d="M3232 394h8v2h-8z" fill="#333" /><path d="M3267.500 389.500h5v4h-5z" fill="none" stroke="#333" strokeWidth="2" /><path d="M3301 388l7 7M3308 388l-7 7" stroke="#333" strokeWidth="2" />
        </svg>
      </div>
      <div className={"flex h-[19px] shrink-0 items-center bg-gradient-to-b from-white to-[#dadada] pl-[5px] pt-[2px] text-[12.500px] font-bold leading-none text-[#333] " + DJV}>
        <div className="w-[37px]"><Fit w={24}><span className="underline">F</span>ile</Fit></div>
        <div className="w-[79px]"><Fit w={65}>Genomes</Fit></div>
        <div className="w-[47px]"><Fit w={33}><span className="underline">V</span>iew</Fit></div>
        <div className="w-[59px]"><Fit w={45}>Trac<span className="underline">k</span>s</Fit></div>
        <div className="w-[69px]"><Fit w={56}>Regions</Fit></div>
        <div className="w-[51px]"><Fit w={37}>Tools</Fit></div>
        <div className="w-[113px]"><Fit w={100}>GenomeSpace</Fit></div>
        <Fit w={31}>Help</Fit>
      </div>
      <div className="h-[2px] shrink-0 bg-[#808080]" />
      <IgvToolbar />
      <div className="h-[3px] shrink-0 bg-[#777]" />
      <TrackRow y={473} h={128} box><HeaderTrack /></TrackRow>
      <div className="h-[3px] shrink-0 bg-[#666]" />
      <TrackRow y={604} h={180} label={
        <div className="pl-[5px]">
          <div className="mt-[67px]"><Fit w={90}>TSVC_variants.vcf</Fit></div>
          <div className="-ml-[5px] mt-[66px] h-[16px] border-y border-t-black border-b-[#ccc] bg-[#f5f5f5] pl-[5px] leading-[15px]"><Fit w={138}>NGS HotSpot ...rol 05-05-16</Fit></div>
        </div>}><VariantTrack /></TrackRow>
      <div className="h-[7px] shrink-0 border-y-2 border-[#757575] bg-[#fafafa]" />
      <TrackRow y={791} h={408} thumb label={
        <div className="pl-[6px]">
          <div className="mt-[4px]"><Fit w={157}>IonXpress_003_rawlib_processed</Fit></div>
          <div><Fit w={66}>am Coverage</Fit></div>
          <div className="mt-[173px]"><Fit w={157}>IonXpress_003_rawlib_processed</Fit></div>
          <div><Fit w={16}>am</Fit></div>
        </div>}><ReadsTrack /></TrackRow>
      <div className="h-[6px] shrink-0 border-y-2 border-[#757575] bg-[#fafafa]" />
      <TrackRow y={1205} h={365} label={
        <div>
          <div className="flex h-[55px] items-start justify-between pl-[5px] pr-[5px]"><Fit w={48}>Sequence</Fit>
            <svg width="16" height="9" className="mt-[2px]"><path d="M0 2h9V0l6 4.500L9 9V7H0z" fill="#000" /></svg></div>
          <div className="flex h-10 items-center bg-[#c0c0c0] pl-[5px] pt-[2px]"><Fit w={70}>RefSeq Genes</Fit></div>
          <div className="flex h-10 items-center pl-[5px] pt-[2px]"><Fit w={37}>hotspot</Fit></div>
        </div>}><GeneTrack /></TrackRow>
      <div className="h-[2px] shrink-0 bg-[#777]" />
      <div className={"flex h-[20px] shrink-0 gap-[3px] bg-[#f0f0f0] text-[12px] leading-[18px] text-[#444] " + DJV}>
        <div className="w-[134px] border border-l-0 border-black pl-px"><Fit w={44}>6 tracks</Fit></div>
        <div className="flex w-4 items-center justify-center border border-black"><div className="size-3 rounded-full bg-[#bbb]" /></div>
        <div className="w-[150px] border border-black pl-px"><Fit w={99}>chr5:112,174,673</Fit></div>
        <div className="flex-1 border border-black" />
        <div className="w-[101px] border border-black pl-px"><Fit w={78}>597M of 900M</Fit></div>
      </div>
      <div className={"flex h-[34px] shrink-0 items-center gap-[4px] bg-gradient-to-b from-[#ececec] to-[#dedede] text-[13.500px] leading-none text-[#3a3a3a] " + DJV}>
        <GnomeTask w={262} tw={212} text="Mutation overview page TP53 - p.E..." icon={
          <svg width="22" height="22" viewBox="0 0 20 20"><circle cx="10" cy="10" r="9.500" fill="#e2641c" /><circle cx="11" cy="8" r="6" fill="#2a5fb0" /><path d="M1 8q3 9 10 7 6 0 6-7 3 11-7 12Q2 18 1 8z" fill="#f7a323" /></svg>} />
        <GnomeTask w={262} tw={32} text="[lab8]" dim icon={<svg width="24" height="20" viewBox="-3 0 24 20" fill="#e4e4e4" stroke="#aaa"><rect x=".5" y=".5" width="16" height="19" rx="2" /><path d="M3 4h11v5H3zM3 11h11v5H3z" /></svg>} />
        <GnomeTask w={262} tw={212} text="[student@msbi32400lab5:/data/lab..." dim icon={<svg width="22" height="20" viewBox="0 0 22 20"><rect width="22" height="20" rx="2" fill="#bbb" /><rect x="2" y="2" width="18" height="16" fill="#858585" /><path d="M5 6l3 2-3 2" stroke="#eee" fill="none" /></svg>} />
        <GnomeTask w={262} tw={21} text="IGV" active icon={<svg width="20" height="20" viewBox="0 0 20 20"><rect width="20" height="20" fill="#5b9bb5" /><path d="M3 4h4M9 4h3M14 4h4M3 7h8" stroke="#f5e6a0" strokeWidth="2" /><Tx x={10} y={14} s={9} f="#fff">igv</Tx></svg>} />
        <GnomeTask w={262} tw={218} text="*README_Zhongyi_lab8.md (sf_De..." icon={<svg width="22" height="22" viewBox="0 0 22 22"><rect x="1" y="2" width="17" height="19" rx="1" fill="#fbfbf4" stroke="#777" /><path d="M4 7h11M4 10h11M4 13h8M4 16h8" stroke="#999" /><path d="M20 3l2 2L11 17l-3 1 1-3z" fill="#f09030" stroke="#a05010" /></svg>} />
        <div className="flex-1" />
        <div className="mr-[3px] flex h-[26px] w-[47px] items-center justify-center border border-[#ccc] bg-[#e0e0e0] text-[13px]"><Fit w={29}>1 / 4</Fit></div>
      </div>
      <div className="flex flex-1 items-center justify-end border-t-2 border-[#8c8c8c] bg-gradient-to-b from-[#fcfcfc] to-[#dcdcdc] pr-[11px]">
        <VmStatusIcons />
      </div>
      <svg width="16" height="24" viewBox="0 0 16 24" className="absolute left-[714px] top-[1230px]"><path d="M2 1v17l4-3 3 7 3-1-3-7h5z" fill="#222" stroke="#fff" /></svg>
    </div>
  );
}

/* ------------------------------------------------------------- desktop items */

function Folder({ w = 120, h = 94 }: { w?: number; h?: number }) {
  return (
    <svg width={w} height={h} viewBox="0 0 120 94" preserveAspectRatio="none">
      <defs><linearGradient id="fold" x1="0" y1="0" x2="0" y2="1"><stop offset="0" stopColor="#7fc1e8" /><stop offset="1" stopColor="#8ed0f4" /></linearGradient></defs>
      <path d="M2 8q0-6 6-6h26q4 0 7 4l3 4h70q5 0 5 5v70H2z" fill="#5fb0de" />
      <path d="M1 18h118v72q0 3-3 3H4q-3 0-3-3z" fill="url(#fold)" />
      <path d="M1 83h118M1 87h118M1 90h118" stroke="#6fb5dd" />
    </svg>
  );
}

function Label({ lines, cloud }: { lines: [string, number][]; cloud?: boolean }) {
  return (
    <div className={"flex flex-col items-center text-[25px] font-semibold leading-[33px] text-white [text-shadow:0_2px_4px_rgba(0,0,0,0.8)] " + SANS}>
      {lines.map(([t, w], i) => (
        <div key={i} className="flex items-center gap-[7px]">
          <Fit w={w}>{t}</Fit>
          {cloud && <svg width="32" height="26" viewBox="0 0 32 26" fill="none" stroke="#dde2ea" strokeWidth="2"><path d="M10 19H8a6 6 0 0 1-1-12 8 8 0 0 1 15-1 6.500 6.500 0 0 1 2 13h-3" /><path d="M16 11v13M11.500 20l4.500 4.500 4.500-4.500" /></svg>}
        </div>
      ))}
    </div>
  );
}

function DocIcon({ w, h, tag }: { w: number; h: number; tag?: string }) {
  return (
    <svg width={w} height={h} viewBox="0 0 96 124" preserveAspectRatio="none">
      <path d="M1 1h60l34 34v88H1z" fill="#f4f4f4" stroke="#ccc" />
      {Array.from({ length: 14 }, (_, i) => <path key={i} d={`M9 ${12 + i * 5.500}h${i < 5 ? 42 : 40 + ((i * 17) % 38)}`} stroke="#d4d4d4" strokeWidth="1.300" />)}
      <path d="M61 1q2 24-4 32 14-4 38 2z" fill="#d9d9d9" />
      {tag && <Tx x={48} y={108} s={20} f="#777">{tag}</Tx>}
    </svg>
  );
}

function DesktopItems() {
  return (
    <>
      <div className="absolute left-[2103px] top-[64px] flex w-[300px] flex-col items-center gap-[15px]">
        <DocIcon w={90} h={124} tag="HTML" />
        <Label lines={[["AssignmentV.html", 220]]} />
      </div>
      <div className="absolute left-[2591px] top-[64px] flex w-[300px] flex-col items-center gap-[17px]">
        <svg width="120" height="122" viewBox="0 0 120 122">
          <rect x="1" y="1" width="118" height="120" fill="#fdfdfd" stroke="#bbb" /><rect x="5" y="5" width="110" height="112" fill="#f2f1f3" />
          <path d="M5 5h110v7H5z" fill="#7b83a8" /><rect x="10" y="16" width="98" height="96" fill="#fbfcfe" />
          <path d="M40 22h36" stroke="#6a9ae8" strokeWidth="2" />
          <path d="M14 30h86M14 35h74M14 45h88M14 50h60" stroke="#c2c8d4" strokeWidth="1.500" />
          <path d="M16 62h14M16 69h14M16 76h14M16 83h14M48 60h16M48 65h12M48 72h16M48 77h14M82 60h12M82 66h16M82 76h12" stroke="#6f97dd" strokeWidth="1.800" />
          <rect x="34" y="89" width="60" height="8" fill="#1a74c8" />
          <path d="M14 102h88M14 107h70" stroke="#c9cdd6" strokeWidth="1.500" />
        </svg>
        <Label lines={[["Screen Shot", 147], ["2018-10...6.32 PM", 218]]} />
      </div>
      <div className="absolute left-[2837px] top-[79px] flex w-[300px] flex-col items-center gap-[30px]">
        <Folder /><Label lines={[["GMAT", 76]]} cloud />
      </div>
      <div className="absolute left-[3080px] top-[79px] flex w-[300px] flex-col items-center gap-[30px]">
        <Folder /><Label lines={[["2017Spring", 137]]} cloud />
      </div>
      <div className="absolute left-[2685px] top-[278px]"><DocIcon w={80} h={110} /></div>
      <div className="absolute left-[2942px] top-[290px] h-[40px] w-[87px] border-4 border-white bg-[#6a9be0]" />
      <div className="absolute left-[2347px] top-[1646px] flex w-[300px] flex-col items-center gap-[31px]">
        <Folder /><Label lines={[["AppliedAnalyticsFi", 225], ["nal", 36]]} />
      </div>
      <div className="absolute left-[2607px] top-[1610px] flex w-[300px] flex-col items-center gap-[31px]">
        <Folder /><Label lines={[["UChicago Intern", 194], ["Application", 136]]} />
      </div>
      <div className="absolute left-[2883px] top-[1628px] flex w-[300px] flex-col items-center gap-[31px]">
        <Folder /><Label lines={[["transcripts resume", 229]]} />
      </div>
      <div className="absolute left-[3081px] top-[1644px] flex w-[300px] flex-col items-center gap-[31px]">
        <Folder /><Label lines={[["Games", 82]]} />
      </div>
    </>
  );
}

/* ----------------------------------------------------------------- the dock */

function Round({ id, a, b, ring = "#e8e8ea", children }: { id: string; a: string; b: string; ring?: string; children?: ReactNode }) {
  return (
    <>
      <defs><linearGradient id={id} x1="0" y1="0" x2="0" y2="1"><stop offset="0" stopColor={a} /><stop offset="1" stopColor={b} /></linearGradient></defs>
      <circle cx="38" cy="38" r="32" fill={ring} /><circle cx="38" cy="38" r="29.500" fill={`url(#${id})`} />
      {children}
    </>
  );
}

function DocThumb({ children }: { children?: ReactNode }) {
  return (
    <>
      <path d="M14 3h48v68H14z" fill="#f5f5f5" stroke="#ccc" />
      {Array.from({ length: 15 }, (_, i) => <path key={i} d={`M18 ${9 + i * 4}h${22 + ((i * 13) % 18)}`} stroke="#a8a8a8" strokeWidth="1.300" />)}
      {children}
    </>
  );
}

function Office({ c, d, t, children }: { c: string; d: string; t: string; children?: ReactNode }) {
  return (
    <>
      <rect x="38" y="13" width="32" height="52" fill="#fdfdfd" />
      {children}
      <path d="M5 12L43 5v66L5 63z" fill={c} /><path d="M5 40l38-8v39L5 63z" fill={d} opacity=".35" />
      <text x="23" y="48" fontSize="27" fontWeight="700" fill="#fff" textAnchor="middle" className={SANS}>{t}</text>
    </>
  );
}

const PETALS = ["#f39a2d", "#f2cf3c", "#a9cf46", "#6fbf8a", "#6aa6dc", "#8c7cc8", "#c878b4", "#ea5a4e"];

const DOCK: ReactNode[] = [
  <><defs><linearGradient id="find" x1="0" y1="0" x2="0" y2="1"><stop offset="0" stopColor="#4fc6f8" /><stop offset="1" stopColor="#3a6ff0" /></linearGradient></defs><rect x="8" y="10" width="60" height="57" rx="4" fill="url(#find)" /><path d="M40 10h24q4 0 4 4v49q0 4-4 4H44q-2-10-2-21h-7q0-20 5-36z" fill="#eef3fa" /><path d="M25 25v7M52 25v7M19 46q19 18 38 0" stroke="#111" strokeWidth="2.500" fill="none" strokeLinecap="round" /><path d="M40 10q-5 16-5 36h7" stroke="#12233a" strokeWidth="1.500" fill="none" /></>,
  <Round id="siri" a="#3a2350" b="#0a1030"><path d="M14 30Q26 12 46 16 60 22 56 34 48 24 38 38 30 30 14 30z" fill="#d63a8a" opacity=".75" /><path d="M12 42q14-8 26-4 12-10 24-2-10 2-14 10-8 14-18 10-12-2-18-14z" fill="#2ab8c8" opacity=".8" /><path d="M38 38l-6 22q14 2 12-8z" fill="#9ff" opacity=".7" /><path d="M38 24l2 12 14-2-13 5 6 14-9-12-12 8 9-11-13-6 14 3z" fill="#fff" opacity=".85" /></Round>,
  <Round id="launch" a="#c3ccd2" b="#7d8083" ring="#d9dcdf"><path d="M55 18q-14 0-21 14l-10 3-6 10 9-2 8 8-2 9 9-7 2-10q12-9 11-25z" fill="#3c4043" /><path d="M25 50l-6 10 9-5z" fill="#3c4043" /><circle cx="45" cy="29" r="4" fill="#aeb6bb" /></Round>,
  <Round id="safari" a="#2fb7f5" b="#1b62dc"><circle cx="38" cy="38" r="26" fill="none" stroke="#cfe8fb" strokeWidth="3" strokeDasharray="1 2.400" /><path d="M56 19L34 34l8 8z" fill="#e63b30" /><path d="M20 57l14-23 8 8z" fill="#f2f2f2" /></Round>,
  <><circle cx="38" cy="38" r="33" fill="#e8453c" /><path d="M38 38L9.500 21.500A33 33 0 0 0 36 71z" fill="#4aa35a" /><path d="M38 38l-2 33A33 33 0 0 0 67 22H38z" fill="#fbc73c" /><path d="M9.500 21.500L24 46l14-24h29A33 33 0 0 0 9.500 21.500z" fill="#d94a3f" /><circle cx="38" cy="38" r="15" fill="#f4f4f4" /><circle cx="38" cy="38" r="12" fill="#4a82ea" /></>,
  <><circle cx="40" cy="36" r="28" fill="#2a6fe0" /><circle cx="42" cy="42" r="14" fill="#1e1c66" /><path d="M10 12q2 6 6 9 6-5 12-3-3 5 2 9 8 1 9 5-5 4-10 8-1 14 12 15 14 0 15-13 3-16-6-22 8 0 13 10 8 16 3 26-8 16-26 16Q14 71 6 48q-1-18 4-36z" fill="#f4502c" /><path d="M54 2q4 12 14 22 6 20-2 34-12 14-24 12 18-6 18-24 0-14-8-22-6-12 2-22z" fill="#fcd034" /></>,
  <g transform="rotate(-7 38 38)"><rect x="15" y="6" width="46" height="62" fill="#f7f7f7" stroke="#f7f7f7" strokeWidth="3" strokeDasharray="3 2" /><rect x="19" y="10" width="38" height="54" fill="#4e92dc" /><path d="M19 46h38v18H19z" fill="#a9cdee" /><path d="M25 16q6 4 8 12l8 6q8 2 12 8-6 0-8 4l-2 12q-6-4-6-14l-8-10q-6-8-4-18z" fill="#5c4632" /><path d="M40 34q8 0 10 6-6 2-8-2z" fill="#e8dcc8" /><circle cx="56" cy="58" r="11" fill="none" stroke="#6a7892" strokeWidth="2" opacity=".6" /></g>,
  <g transform="rotate(-4 38 38)"><rect x="14" y="8" width="46" height="62" rx="3" fill="#a27a48" /><path d="M60 14h5v10h-5z" fill="#9cc" /><path d="M60 28h5v12h-5z" fill="#6bb" /><path d="M60 42h5v12h-5z" fill="#fb3" /><circle cx="38" cy="36" r="15" fill="none" stroke="#83602f" strokeWidth="2" /><path d="M28 46q2-8 6-8-3-10 4-10t4 10q6 0 6 8z" fill="#83602f" opacity=".6" /></g>,
  <g transform="rotate(-5 38 38)"><rect x="12" y="11" width="50" height="58" rx="2" fill="#777d80" /><rect x="13" y="9" width="48" height="56" fill="#fdfdfd" /><path d="M13 9h48v15H13z" fill="#e0453c" /><text x="37" y="21" fontSize="12" fill="#fff" textAnchor="middle" className={SANS}>MAR</text><text x="37" y="54" fontSize="30" fill="#222" textAnchor="middle" className={SANS}>12</text></g>,
  <g transform="rotate(-5 38 38)"><rect x="13" y="7" width="50" height="62" fill="#fdfcf6" /><path d="M13 7h50v13H13z" fill="#fbcd3a" />{[26, 32, 38, 44, 50, 56, 62].map((y) => <path key={y} d={`M13 ${y}h50`} stroke="#cfcfcf" />)}</g>,
  <><g transform="rotate(-6 38 38)"><rect x="12" y="10" width="48" height="59" rx="3" fill="#fbfbfb" />{["#f5963c", "#4fa5ee", "#7ed04a", "#b56fd8"].map((c, i) => <g key={c}><circle cx="20" cy={24 + i * 11.500} r="4" fill={c} /><path d={`M28 ${24 + i * 11.500}h26`} stroke="#ddd" /></g>)}</g><circle cx="60" cy="16" r="14" fill="#e34b40" /><text x="60" y="23" fontSize="19" fill="#fff" textAnchor="middle" className={SANS}>1</text></>,
  <><g transform="rotate(-6 38 38)"><rect x="12" y="10" width="52" height="56" fill="#f1ead8" stroke="#fff" strokeWidth="2" /><path d="M44 10h20v26q-16-8-20-26z" fill="#8fd07a" /><path d="M13 48q8 2 12 18H13z" fill="#f2b8c8" /><path d="M24 11v54" stroke="#3b86e8" strokeWidth="7" /><path d="M34 11q4 29 29 35" stroke="#f5d04a" strokeWidth="5" fill="none" /><circle cx="27" cy="44" r="8" fill="#2d76d8" /><path d="M27 38l4 10-4-2-4 2z" fill="#fff" /></g><circle cx="58" cy="52" r="14" fill="#f5f5f5" stroke="#bbb" /><circle cx="58" cy="52" r="10" fill="none" stroke="#8ab" /><text x="58" y="56" fontSize="11" fill="#333" textAnchor="middle" className={SANS}>3D</text></>,
  <><circle cx="38" cy="38" r="32" fill="#f4f4f4" />{PETALS.map((c, i) => <ellipse key={c} cx="38" cy="22" rx="8.500" ry="13" fill={c} opacity=".88" transform={`rotate(${i * 45} 38 38)`} />)}</>,
  <><path d="M34 8c18 0 31 12 31 28S52 62 34 62q-4 0-8-1-6 6-14 5 5-4 5-10Q4 48 4 36 4 20 34 8z" fill="#4a9df5" /><path d="M50 34c11 0 19 7 19 15 0 6-3 10-7 12l2 6-8-4c-14 2-25-5-25-14s8-15 19-15z" fill="#eef3fb" /><circle cx="41" cy="49" r="3" fill="#2a5a9c" /><circle cx="50" cy="49" r="3" fill="#2a5a9c" /><circle cx="59" cy="49" r="3" fill="#2a5a9c" /></>,
  <><rect x="8" y="11" width="52" height="48" rx="6" fill="#58d565" /><rect x="15" y="24" width="26" height="22" rx="4" fill="#fff" /><path d="M43 32l10-7v20l-10-7z" fill="#fff" /><circle cx="57" cy="50" r="15" fill="#f6f6f6" /><path d="M51 43q-4 6 3 12 6 6 11 2l-3-4-4 1-4-4 1-4z" fill="#4cc85a" /></>,
  <g transform="rotate(-6 38 38)"><rect x="12" y="8" width="48" height="62" fill="#fcfcfc" /><path d="M12 8h48v12H12z" fill="#f0993a" /><text x="15" y="18" fontSize="9" fill="#fff" className={SANS}>PAGES</text><rect x="16" y="25" width="20" height="18" fill="#3a76d8" /><path d="M21 28h11l-4 6-1 7h-2l-1-7z" fill="#f08a30" /><path d="M40 27h16M40 31h16M40 35h16M40 39h16M16 48h40M16 52h40M16 56h40M16 60h34" stroke="#999" /><path d="M58 4l6 2-10 54-5 10-1-11z" fill="#f0a030" stroke="#7a5a30" /></g>,
  <><path d="M7 43h62v26H7z" fill="#f2f2f2" /><rect x="14" y="38" width="11" height="26" fill="#e2504a" /><rect x="27" y="26" width="11" height="38" fill="#f0993a" /><rect x="40" y="8" width="11" height="56" fill="#58c85a" /><rect x="53" y="18" width="11" height="46" fill="#3f93ee" /></>,
  <><path d="M14 6h48l6 24H8z" fill="#3e9aee" /><path d="M8 30h60v4H8z" fill="#1f6cc0" /><path d="M20 9h36l2 17H18z" fill="#fff" /><circle cx="32" cy="18" r="6" fill="#e86" /><path d="M32 12a6 6 0 0 1 6 6h-6z" fill="#58c85a" /><path d="M42 14h12M42 18h12M42 22h12" stroke="#bbb" /><path d="M36.500 34h3v32h-3z" fill="#cfd3d8" /><ellipse cx="38" cy="66" rx="14" ry="5" fill="#d6e6f2" /></>,
  <Round id="news" a="#f0525f" b="#e83e50"><path d="M22 22h9l23 25v8h-9L22 30z" fill="#fff" /><path d="M22 37l14 18H22zM54 40L40 22h14z" fill="#fff" /></Round>,
  <Round id="itunes" a="#fff" b="#f0f2f8" ring="#d858c8"><path d="M30 24l22-5v28" fill="none" stroke="#e2468c" strokeWidth="4" /><path d="M30 24v29" stroke="#8a4ce0" strokeWidth="4" /><ellipse cx="25" cy="54" rx="7" ry="5.500" fill="#8a58f0" /><ellipse cx="47" cy="48" rx="7" ry="5.500" fill="#3f8cf4" /></Round>,
  <Round id="books" a="#f5a02a" b="#d85a1c"><path d="M37 26q-8-6-18-3v26q10-2 18 4zM39 26q8-6 18-3v26q-10-2-18 4z" fill="#fff" /></Round>,
  <Round id="store" a="#38b4f8" b="#2a62e8"><path d="M40 21L26 52M36 21l16 31M18 44h26M50 44h8" stroke="#fff" strokeWidth="4.500" strokeLinecap="round" fill="none" /></Round>,
  <><rect x="8" y="9" width="60" height="59" rx="3" fill="#a9b0b4" /><circle cx="38" cy="38" r="26" fill="#2b2d2f" /><circle cx="38" cy="38" r="21" fill="none" stroke="#a8a8a8" strokeWidth="4" strokeDasharray="2.500 2" /><circle cx="38" cy="38" r="16" fill="#4a4c4e" stroke="#bbb" strokeWidth="3" /><path d="M38 38L30 24M38 38h16M38 38l-8 14" stroke="#bbb" strokeWidth="3" /><circle cx="38" cy="38" r="5" fill="#bbb" /></>,
  <Office c="#2f8052" d="#14502c" t="X">{[18, 26, 34, 42, 50, 58].map((y, i) => <path key={y} d={`M46 ${y}h9M58 ${y}h9`} stroke={i ? "#3f8a5c" : "#444"} strokeWidth="5" />)}</Office>,
  <><path d="M42 20h30v34H42z" fill="#fff" /><path d="M43 22l13 16 15-17" stroke="#223" strokeWidth="2" fill="none" /><path d="M6 12L43 5v66L6 63z" fill="#2f86d8" /><text x="23" y="48" fontSize="27" fontWeight="700" fill="#fff" textAnchor="middle" className={SANS}>O</text></>,
  <><ellipse cx="38" cy="34" rx="31" ry="20" fill="none" stroke="#b5b8bf" strokeWidth="10" /><text x="50" y="66" fontSize="54" fontWeight="800" fill="#2f6cba" textAnchor="middle" className={SANS}>R</text></>,
  <Office c="#3a62ac" d="#1c3a78" t="W">{[18, 25, 32, 39, 46, 53, 60].map((y) => <path key={y} d={`M44 ${y}h23`} stroke="#26324c" strokeWidth="2.500" />)}</Office>,
  <><circle cx="38" cy="38" r="36" fill="#1d56b8" /><circle cx="38" cy="52" r="20" fill="#6cc0f0" opacity=".6" /><ellipse cx="38" cy="20" rx="23" ry="16" fill="#cfe0f8" opacity=".6" /><text x="40" y="52" fontSize="42" fill="#fff" textAnchor="middle" className="[font-family:'Liberation_Serif',serif]">R</text></>,
  <><path d="M6 58L8 20 34 4l10 30L30 72z" fill="#53d08c" /><path d="M34 20L52 4l6 40z" fill="#b5e84c" /><path d="M58 24l12 14-16 20z" fill="#3ab4e8" /><path d="M24 56L60 20l10 42-20 11z" fill="#f2f15c" /><rect x="18" y="18" width="38" height="42" fill="#0b0b0b" /><text x="37" y="41" fontSize="22" fontWeight="700" fill="#fff" textAnchor="middle" className={SANS}>PC</text><path d="M23 52h14" stroke="#fff" strokeWidth="3" /></>,
  <><circle cx="39" cy="38" r="30" fill="none" stroke="#5fb440" strokeWidth="12" /><path d="M22 8Q-2 38 24 70" fill="none" stroke="#6a7089" strokeWidth="1.500" /><path d="M12 18q-14 22 4 44" fill="none" stroke="#6a7089" strokeWidth="13" strokeDasharray="2 6" /></>,
  <><rect x="2" y="2" width="72" height="72" rx="12" fill="#d8322c" /><text x="38" y="49" fontSize="31" fontWeight="900" fill="#fff" textAnchor="middle" className="[font-family:'Noto_Sans_CJK_SC',sans-serif]">有道</text></>,
  <><ellipse cx="38" cy="68" rx="17" ry="6" fill="#c4d0de" /><path d="M36 2l28 16v34L36 68 8 52V18z" fill="#24466e" /><path d="M36 2l28 16-28 18L8 18z" fill="#dfe8f2" /><path d="M36 6l22 12-22 14-22-14z" fill="#1c3a60" /><path d="M27 20l5-7 2 8 5-7 2 8 5-7" fill="none" stroke="#fff" strokeWidth="1.800" /><path d="M36 36v31M8 18l28 18 28-18" stroke="#e8eef5" strokeWidth="4" fill="none" /><path d="M9 19v32l27 16 27-16V19" stroke="#e8eef5" strokeWidth="3" fill="none" /><path d="M14 34l16 11M42 46l16-11" stroke="#cdd8e4" strokeWidth="4" strokeDasharray="2 1.500" /></>,
  <><circle cx="38" cy="38" r="33" fill="#4470cc" /><path d="M38 38L9.500 21.500A33 33 0 0 0 36 71z" fill="#86aef4" /><path d="M38 38l-2 33A33 33 0 0 0 67 22H38z" fill="#a8c6f8" /><circle cx="38" cy="38" r="15" fill="#fff" /><circle cx="38" cy="38" r="12.500" fill="#5b8def" /></>,
];
const DOCK2: ReactNode[] = [
  <Office c="#d8512f" d="#8a2a14" t="P"><path d="M55 20a9 9 0 1 0 9 9h-9z" fill="#444" /><path d="M58 17a9 9 0 0 1 9 9h-9z" fill="#d8512f" /><path d="M46 48h20M46 54h20M46 60h20" stroke="#d8512f" strokeWidth="2" /></Office>,
  <><rect x="3" y="3" width="70" height="69" rx="2" fill="#e2e2e2" /><rect x="6" y="6" width="64" height="12" fill="#111" /><rect x="6" y="20" width="64" height="28" fill="#f8f8f8" /><path d="M8 23h58M30 30h34" stroke="#999" strokeDasharray="2 3" /><path d="M24 26v13M38 26v13M44 26v13M50 26v13M56 26v13" stroke="#bbb" strokeWidth="2" /><path d="M8 41h60" stroke="#5560b0" strokeWidth="1.500" /><rect x="6" y="49" width="64" height="11" fill="#111" /><rect x="50" y="51" width="24" height="23" fill="#333a50" /><rect x="52" y="52" width="12" height="7" fill="#f4f4f4" /><ellipse cx="62" cy="67" rx="10" ry="7" fill="#e03c28" /><ellipse cx="67" cy="57" rx="5" ry="6" fill="#ec5138" /></>,
  <><rect x="14" y="10" width="54" height="42" fill="#b09a68" stroke="#f4f0e6" strokeWidth="2" transform="rotate(3 38 38)" /><path d="M4 20l54-7 4 46-52 9z" fill="#fff" /><path d="M7 23l49-6 2 22-49 7z" fill="#69a2dc" /><path d="M9 46l49-7 1 17-48 8z" fill="#2a5580" /><path d="M12 56l20-8 8 4 14-6v4l-16 8-25 6z" fill="#e8f0f6" /><ellipse cx="59" cy="56" rx="13" ry="16" fill="#5a4c38" /><ellipse cx="59" cy="47" rx="12" ry="12" fill="#33302e" /><ellipse cx="59" cy="47" rx="10" ry="10" fill="#9fb2bf" /></>,
  <Round id="tex" a="#8fa6a8" b="#56686c" ring="#cfd6d8"><text x="38" y="47" fontSize="27" fontWeight="700" fill="#fff" textAnchor="middle" className="[font-family:'Liberation_Serif',serif]"><tspan>T</tspan><tspan dx="-3" dy="5">E</tspan><tspan dx="-2" dy="-5">X</tspan></text></Round>,
];
const DOCK3: ReactNode[] = [
  <DocThumb><path d="M44 3l18 22V3z" fill="#ddd" /><rect x="18" y="57" width="40" height="13" fill="#f5f5f5" /><text x="38" y="68" fontSize="12" fill="#777" textAnchor="middle" className={SANS}>HTML</text></DocThumb>,
  <><rect x="3" y="8" width="70" height="61" fill="#ededed" stroke="#ccc" /><path d="M3 17h70" stroke="#aaa" /><circle cx="14" cy="12" r="3" fill="#5aa0e0" /><circle cx="28" cy="12" r="3" fill="#e0a040" /><path d="M24 22h20M24 27h24M24 32h18M24 38h22M24 44h16M24 50h22M6 22h12M6 28h12" stroke="#666" /><rect x="50" y="20" width="20" height="12" fill="#d8d8d8" stroke="#aaa" /><path d="M58 46l12 6v14l-12 7-10-7V52z" fill="#24466e" stroke="#e8eef5" /></>,
  <DocThumb><circle cx="57" cy="60" r="12" fill="#6b8084" stroke="#cfd6d8" /><text x="57" y="64" fontSize="10" fill="#fff" textAnchor="middle" className="[font-family:'Liberation_Serif',serif]">TEX</text></DocThumb>,
  <><path d="M13 12l14-8 8 6 10-8 12 10 4 6H14z" fill="#e9e9e9" stroke="#999" /><path d="M22 8l6 8M40 6l6 10" stroke="#557" strokeWidth="3" /><path d="M11 14h54l-6 54q-20 8-42 0z" fill="#dcdee0" /><path d="M22 18l4 52M38 18v54M54 18l-4 52" stroke="#cfd1d3" strokeWidth="1.500" /><ellipse cx="38" cy="14" rx="27" ry="4" fill="none" stroke="#f4f4f4" strokeWidth="2" /></>,
];

function DockItem({ dot, children }: { dot?: boolean; children: ReactNode }) {
  return (
    <div className="flex w-[77.040px] shrink-0 flex-col items-center">
      <svg width="76" height="76" viewBox="0 0 76 76">{children}</svg>
      {dot && <div className="mt-[4px] size-2 rounded-full bg-black" />}
    </div>
  );
}

function Dock() {
  const open = [0, 4, 5, 23, 30, 31, 32];
  return (
    <div className="absolute left-[60px] top-[2004px] flex h-[110px] w-[3240px] rounded-t-[14px] bg-[#6a7089] pl-[6.500px] pt-[6px]">
      {DOCK.map((ic, i) => <DockItem key={i} dot={open.includes(i)}>{ic}</DockItem>)}
      <div className="flex w-[35px] shrink-0 justify-center pt-[6px]"><div className="h-[70px] w-[2px] bg-[#444b66]" /></div>
      {DOCK2.map((ic, i) => <DockItem key={i} dot>{ic}</DockItem>)}
      <div className="flex w-[35px] shrink-0 justify-center pt-[6px]"><div className="h-[70px] w-[2px] bg-[#444b66]" /></div>
      {DOCK3.map((ic, i) => <DockItem key={i}>{ic}</DockItem>)}
    </div>
  );
}

function Wallpaper() {
  const r = rng(99);
  return (
    <svg width="3360" height="2100" viewBox="0 0 3360 2100" className="absolute inset-0">
      <defs>
        <linearGradient id="sky" x1="0" y1="0" x2="0" y2="1">
          <stop offset="0" stopColor="#0e192c" /><stop offset=".14" stopColor="#1a2842" /><stop offset=".5" stopColor="#36425f" /><stop offset="1" stopColor="#3a4158" />
        </linearGradient>
        <linearGradient id="dune" x1="0" y1="0" x2="1" y2="0"><stop offset="0" stopColor="#232a3e" /><stop offset=".5" stopColor="#2a3044" /><stop offset="1" stopColor="#383f54" /></linearGradient>
        <filter id="grain" x="0" y="0" width="1" height="1">
          <feTurbulence type="fractalNoise" baseFrequency=".09 .16" numOctaves="3" seed="4" />
          <feColorMatrix values="0 0 0 0 0.55  0 0 0 0 0.6  0 0 0 0 0.72  0.9 0 0 0 -0.36" />
        </filter>
      </defs>
      <rect width="3360" height="2100" fill="url(#sky)" />
      {Array.from({ length: 90 }, (_, i) => <circle key={i} cx={1500 + r() * 1860} cy={46 + r() * 250} r={0.600 + r()} fill="#aebbd0" opacity={0.200 + r() * 0.500} />)}
      <path d="M0 1500L3250 1180l110 60v860H0z" fill="url(#dune)" />
      <rect y="1660" width="3360" height="440" filter="url(#grain)" opacity=".5" />
    </svg>
  );
}

export default function App() {
  return (
    <div className="relative h-[2100px] w-[3360px] overflow-hidden">
      <Wallpaper />
      <div className="relative"><MenuBar /></div>
      <DesktopItems />
      <PreviewWindow />
      <VmWindow />
      <Dock />
    </div>
  );
}
